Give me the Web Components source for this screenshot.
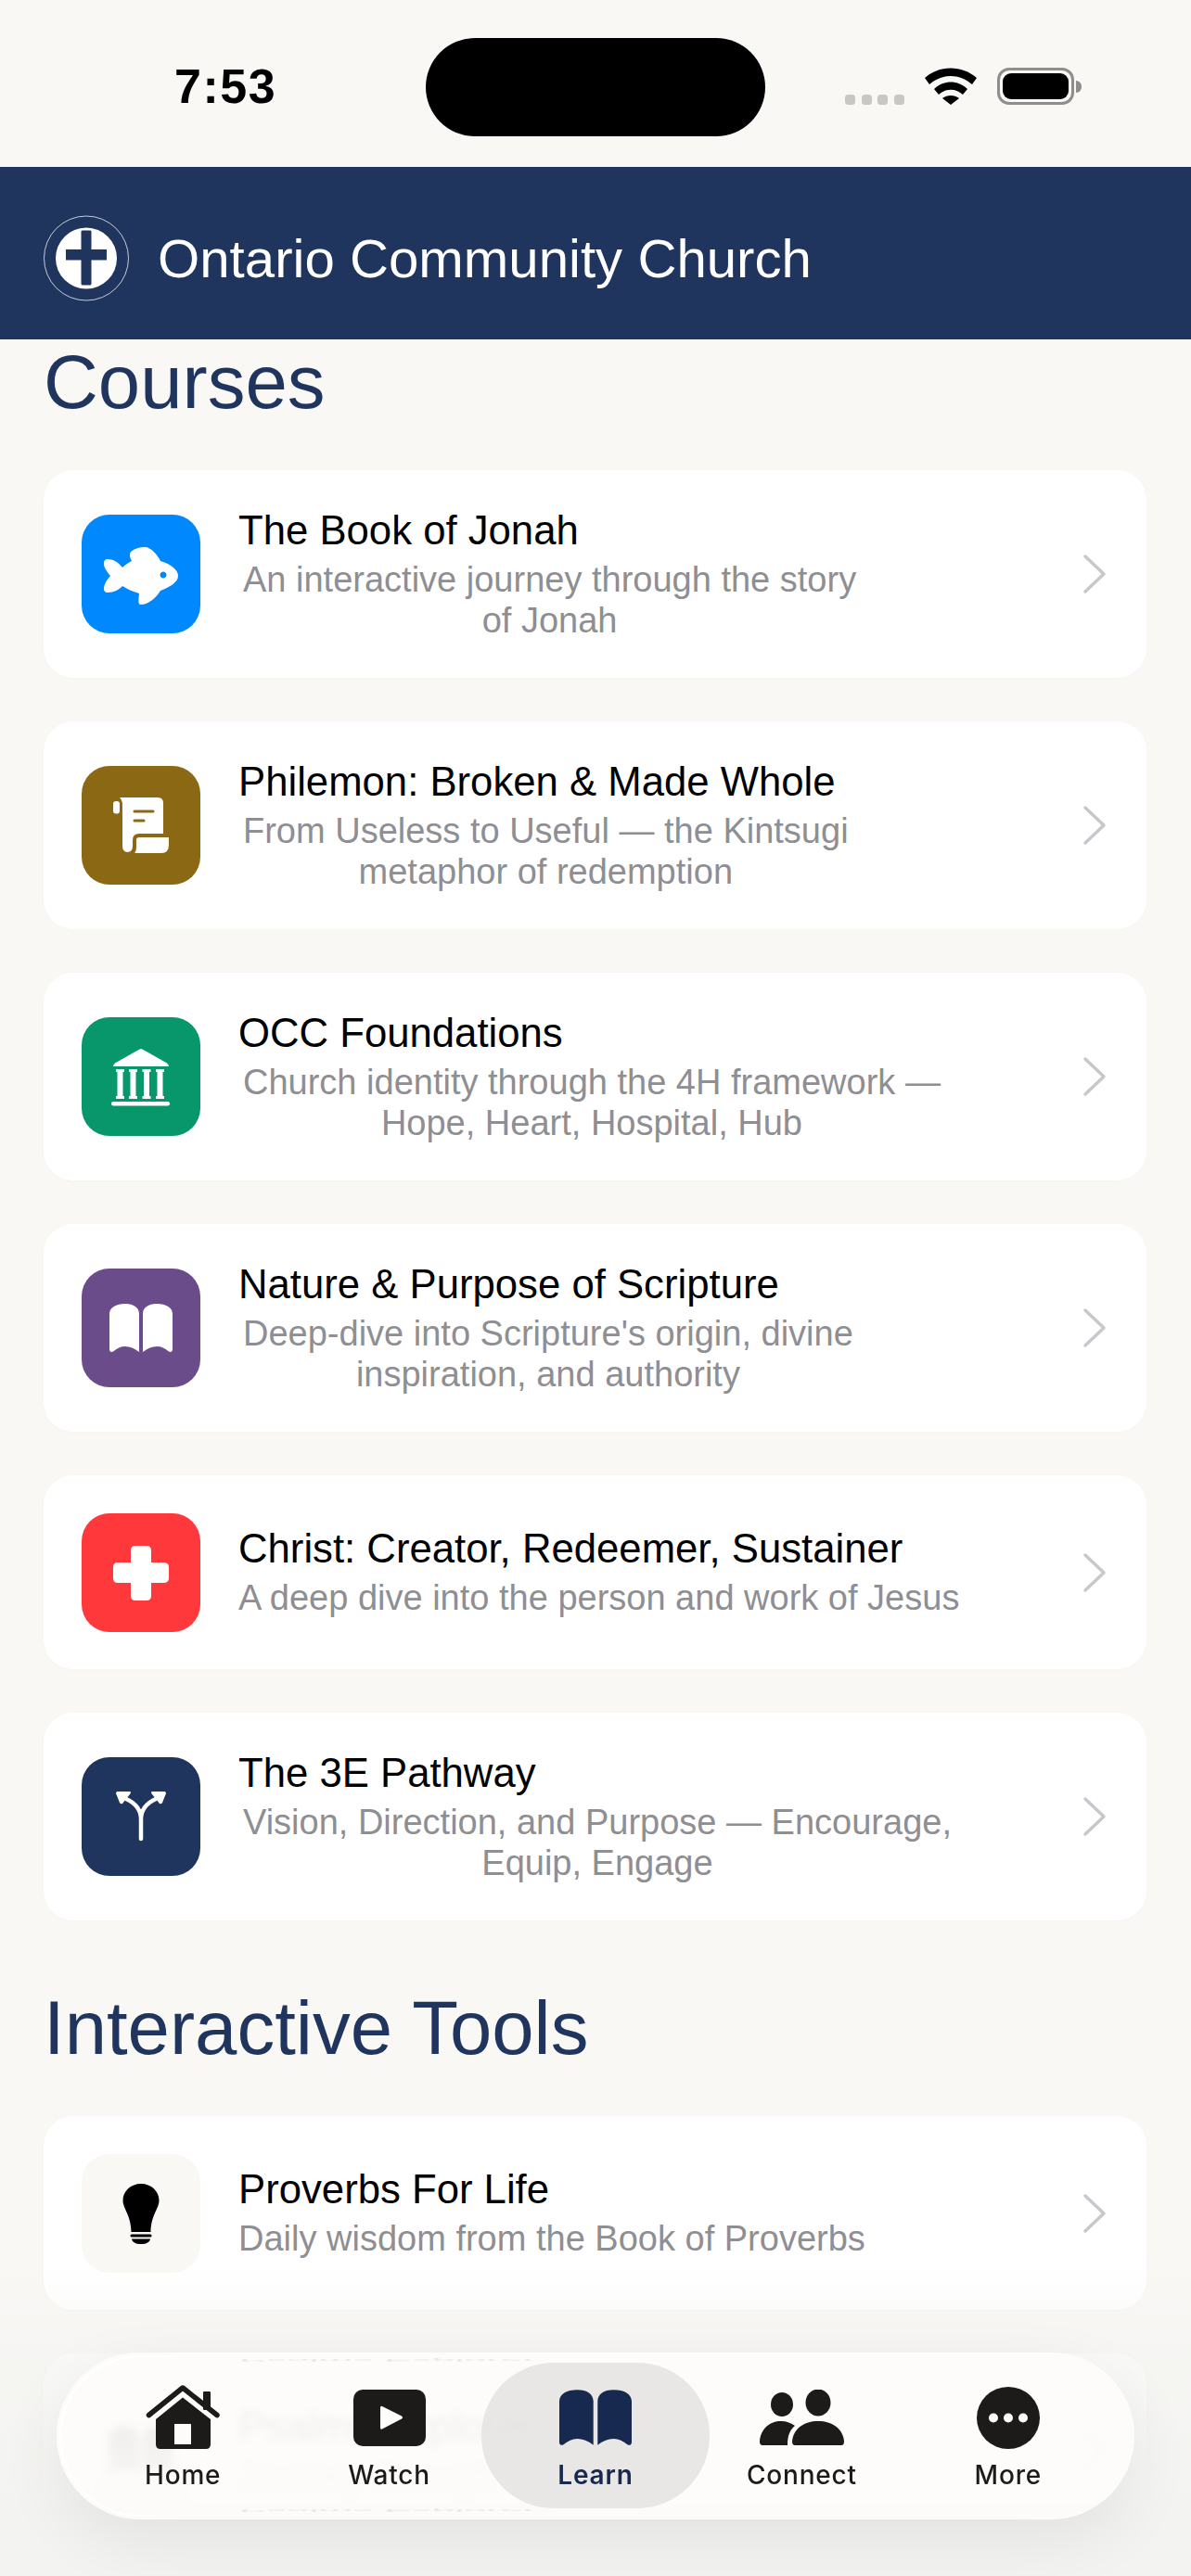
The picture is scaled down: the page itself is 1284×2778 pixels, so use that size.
<!DOCTYPE html>
<html lang="en">
<head>
<meta charset="utf-8">
<title>Ontario Community Church</title>
<style>
  html, body { margin: 0; height: 2778px; overflow: hidden; background: #f9f8f5; }
  body { font-family: "Liberation Sans", Arial, sans-serif; }
</style>
</head>
<body>
<app-screen>
  <status-bar time="7:53"></status-bar>
  <church-header>Ontario Community Church</church-header>
  <course-list>
    <section-title>Courses</section-title>
    <course-row tint="#0088ff" icon="fish" wrapped>
      The Book of Jonah
      <span slot="sub">An interactive journey through the story<br>of Jonah</span>
    </course-row>
    <course-row tint="#8b6914" icon="scroll" wrapped>
      Philemon: Broken &amp; Made Whole
      <span slot="sub">From Useless to Useful — the Kintsugi<br>metaphor of redemption</span>
    </course-row>
    <course-row tint="#07976b" icon="bank" wrapped>
      OCC Foundations
      <span slot="sub">Church identity through the 4H framework —<br>Hope, Heart, Hospital, Hub</span>
    </course-row>
    <course-row tint="#6b4c8a" icon="book" wrapped>
      Nature &amp; Purpose of Scripture
      <span slot="sub">Deep-dive into Scripture's origin, divine<br>inspiration, and authority</span>
    </course-row>
    <course-row tint="#ff383c" icon="plus">
      Christ: Creator, Redeemer, Sustainer
      <span slot="sub">A deep dive into the person and work of Jesus</span>
    </course-row>
    <course-row tint="#1f355e" icon="fork" wrapped>
      The 3E Pathway
      <span slot="sub">Vision, Direction, and Purpose — Encourage,<br>Equip, Engage</span>
    </course-row>
    <section-title later>Interactive Tools</section-title>
    <course-row tint="#f9f8f5" ink="#000" icon="bulb">
      Proverbs For Life
      <span slot="sub">Daily wisdom from the Book of Proverbs</span>
    </course-row>
    <course-row tint="#f9f8f5" ink="#000" icon="book">
      Psalms Explorer
      <span slot="sub">Journey through the Psalms</span>
    </course-row>
  </course-list>
  <bottom-fade></bottom-fade>
  <tab-bar>
    <tab-item icon="home">Home</tab-item>
    <tab-item icon="watch">Watch</tab-item>
    <tab-item icon="learn" active>Learn</tab-item>
    <tab-item icon="connect">Connect</tab-item>
    <tab-item icon="more">More</tab-item>
  </tab-bar>
</app-screen>

<script>
// tile icons are drawn on the 128x128 tile, ink comes from currentColor
const tileIcons = {
  fish: `<path fill-rule="evenodd" d="M31 66C27 61 24 57 24 53C24 50 25 48 28 48C35 48 40 52 44 57C47 54 50 52 54 50C52 46 51 43 53 40C58 36 63 35 69 35C75 36 81 42 85 50C95 53 104 59 104 66C104 73 95 78 85 82C80 90 72 97 64 97C61 97 61 94 62 85C55 83 49 80 44 77C40 81 35 84 28 84C25 84 24 82 24 80C24 75 27 71 31 66ZM88 61.500a3.500 3.500 0 1 0 .01 0Z"/>`,
  scroll: `<rect x="34" y="38" width="7" height="13.500" rx="3"/>
    <path fill-rule="evenodd" d="M41 34H82Q88 34 88 40V73H62Q55 73 55 80V86Q55 93 49.500 93Q44 93 44 86V42Q44 37 41 34ZM57 47.500a1.500 1.500 0 0 0 0 3H77a1.500 1.500 0 0 0 0-3ZM57 57.500a1.500 1.500 0 0 0 0 3H67a1.500 1.500 0 0 0 0-3Z"/>
    <path d="M62 77H94V85Q94 94 86 94H57Q59 92 59 87V80Q59 77 62 77Z"/>`,
  bank: `<path d="M62.500 34.500Q64 33.500 65.500 34.500L92 49.500Q94 51 94 53H34Q34 51 36 49.500Z"/>
    <path d="M37 56H46V59H44.500V85H46V88H37V85H38.500V59H37ZM51 56H60V59H58.500V85H60V88H51V85H52.500V59H51ZM65.500 56H74.500V59H73V85H74.500V88H65.500V85H67V59H65.500ZM80 56H89V59H87.500V85H89V88H80V85H81.500V59H80Z"/>
    <rect x="32" y="91" width="63" height="4.500" rx="2.200"/>`,
  book: `<path d="M30 49C30 42 37 38 47 38C56 38 62 42 62 49V90C57 86 52 84 47 84C42 84 38 86 34 89.500C32 90.500 30 90 30 87Z"/>
    <path d="M98 49C98 42 91 38 81 38C72 38 66 42 66 49V90C71 86 76 84 81 84C86 84 90 86 94 89.500C96 90.500 98 90 98 87Z"/>`,
  plus: `<path d="M58 35H70Q75 35 75 40V53H88Q94 53 94 58V70Q94 75 88 75H75V89Q75 94 70 94H58Q53 94 53 89V75H39Q34 75 34 70V58Q34 53 39 53H53V40Q53 35 58 35Z"/>`,
  fork: `<path d="M64 88V67C64 58 59 50 48 45M64 67C64 58 69 50 80 45" fill="none" stroke="currentColor" stroke-width="4.500" stroke-linecap="round"/>
    <path d="M39 37H52Q54 38 52 40L44 50Q42 51 41 49L37 39Q37 37 39 37Z"/>
    <path d="M89 37H76Q74 38 76 40L84 50Q86 51 87 49L91 39Q91 37 89 37Z"/>`,
  bulb: `<path d="M64 32C75 32 83.500 40 83.500 50C83.500 59 75 65 74.500 84H53.500C53 65 44.500 59 44.500 50C44.500 40 53 32 64 32Z"/>
    <rect x="52.500" y="86.500" width="23" height="3" rx="1.500"/>
    <path d="M54 91.500H74C73.500 95 70 97 64 97C58 97 54.500 95 54 91.500Z"/>`
};

// tab icons have their own size, in px
const tabIcons = {
  home: `<svg width="80" height="70" viewBox="0 0 80 70" fill="currentColor">
    <path d="M3.500 32.500L40 3L77 32.500" fill="none" stroke="currentColor" stroke-width="5.500" stroke-linecap="round" stroke-linejoin="round"/>
    <rect x="62" y="7" width="8" height="20" rx="1"/>
    <path d="M40 13.500L70 37V64Q70 69 65 69H16Q11 69 11 64V37Z"/>
    <rect x="31" y="42" width="18" height="22" fill="#fdfcfa"/></svg>`,
  watch: `<svg width="78" height="61" viewBox="0 0 78 61" fill="currentColor">
    <rect width="78" height="61" rx="10"/>
    <path d="M31 18L52 28.500Q54 30 52 31.500L31 42.500Q29 43.500 29 41V20Q29 17 31 18Z" fill="#fdfcfa"/></svg>`,
  learn: `<svg width="78" height="60" viewBox="30 38 68 52" fill="currentColor">${tileIcons.book}</svg>`,
  connect: `<svg width="91" height="60" viewBox="0 0 91 60" fill="currentColor">
    <ellipse cx="24" cy="16" rx="12" ry="13"/>
    <ellipse cx="63" cy="14" rx="13.500" ry="14.500"/>
    <path d="M3 60Q0 60 0 56C1 42 11 34 23 34C29 34 34 36 38 39C33 43 30 49 30 60Z"/>
    <path d="M38 60Q35 60 35 56C36 42 48 34 63 34C78 34 90 42 91 56Q91 60 88 60Z"/></svg>`,
  more: `<svg width="68" height="67" viewBox="0 0 68 67" fill="currentColor">
    <ellipse cx="34" cy="33.500" rx="34" ry="33.500"/>
    <g fill="#fdfcfa"><circle cx="18" cy="33.500" r="5"/><circle cx="34" cy="33.500" r="5"/><circle cx="50" cy="33.500" r="5"/></g></svg>`
};

class AppScreen extends HTMLElement {
  constructor() {
    super();
    this.attachShadow({ mode: 'open' }).innerHTML = `
      <style>
        :host { display: flex; flex-direction: column; position: relative; width: 1284px; height: 2778px; overflow: hidden; background: #f9f8f5; }
      </style>
      <slot></slot>`;
  }
}

class StatusBar extends HTMLElement {
  connectedCallback() {
    this.shadowRoot || this.attachShadow({ mode: 'open' });
    this.shadowRoot.innerHTML = `
      <style>
        :host { display: flex; height: 180px; box-sizing: border-box; padding-top: 41px; color: #000; }
        .time { width: 459px; box-sizing: border-box; padding: 27px 0 0 188px; font-size: 52px; line-height: 50px; font-weight: 700; letter-spacing: 1.500px; }
        .island { width: 366px; height: 106px; border-radius: 53px; background: #000; }
        .icons { display: flex; align-items: flex-end; gap: 22px; height: 40px; margin: 32px 0 0 86px; }
        .dots { display: flex; gap: 6.500px; }
        .dots i { width: 11px; height: 11px; border-radius: 3.500px; background: #c8c7c5; }
        .battery { display: flex; align-items: center; gap: 2px; }
        .shell { width: 83px; height: 40px; box-sizing: border-box; padding: 3px; border: 3.500px solid #8e8e8e; border-radius: 13px; }
        .shell b { display: block; height: 100%; border-radius: 9px; background: #000; }
        .nub { width: 6px; height: 13px; border-radius: 0 6px 6px 0; background: #8e8e8e; }
        svg { display: block; }
      </style>
      <div class="time">${this.getAttribute('time')}</div>
      <div class="island"></div>
      <div class="icons">
        <div class="dots"><i></i><i></i><i></i><i></i></div>
        <svg width="56" height="40" viewBox="0 0 56 40"><path d="M0 11C16-3 40-3 56 11L51 18C37 6 19 6 5 18Z"/><path d="M10 23C20 13 36 13 46 23L41 29C33 22 23 22 15 29Z"/><path d="M19 33C24 29 32 29 37 33L28 40Z"/></svg>
        <div class="battery"><div class="shell"><b></b></div><div class="nub"></div></div>
      </div>`;
  }
}

class ChurchHeader extends HTMLElement {
  constructor() {
    super();
    this.attachShadow({ mode: 'open' }).innerHTML = `
      <style>
        :host { display: flex; align-items: center; gap: 31px; height: 186px; box-sizing: border-box; padding: 11px 0 0 47px; background: #1f355e; color: #fff; }
        .logo { display: block; flex: none; }
        .name { font-size: 58.200px; line-height: 70px; }
      </style>
      <svg class="logo" width="92" height="93" viewBox="0 0 92 93">
        <circle cx="46" cy="46.500" r="45.500" fill="none" stroke="#fff" stroke-opacity=".75" stroke-width="1"/>
        <circle cx="46" cy="46.500" r="33" fill="#fff"/>
        <path d="M40.500 17.500Q40.500 16.500 42 16.500H50Q51.500 16.500 51.500 17.500V37H68V48.500H51.500V74Q51.500 75.500 50 75.500H42Q40.500 75.500 40.500 74V48.500H24V37H40.500Z" fill="#1f355e"/>
      </svg>
      <div class="name"><slot></slot></div>`;
  }
}

class CourseList extends HTMLElement {
  constructor() {
    super();
    this.attachShadow({ mode: 'open' }).innerHTML = `
      <style>
        :host { display: flex; flex-direction: column; gap: 47px; padding: 0 48px 0 47px; }
      </style>
      <slot></slot>`;
  }
}

class SectionTitle extends HTMLElement {
  constructor() {
    super();
    this.attachShadow({ mode: 'open' }).innerHTML = `
      <style>
        :host { display: block; font-size: 81.500px; line-height: 92px; color: #1f355e; margin-bottom: 2px; }
        :host([later]) { margin-top: 23px; }
      </style>
      <slot></slot>`;
  }
}

class CourseRow extends HTMLElement {
  connectedCallback() {
    this.shadowRoot || this.attachShadow({ mode: 'open' });
    const tint = this.getAttribute('tint');
    const ink = this.getAttribute('ink') || '#fff';
    this.shadowRoot.innerHTML = `
      <style>
        :host { display: flex; align-items: center; gap: 41px; padding: 40.500px 41px; background: #fff; border-radius: 32px; box-shadow: 0 1px 5px rgba(0,0,0,.015); }
        .tile { flex: none; width: 128px; height: 128px; border-radius: 30px; }
        .tile svg { display: block; }
        .text { flex: 1; min-width: 0; }
        .title { font-size: 43.700px; line-height: 48px; margin-bottom: 7px; color: #000; }
        .sub { width: fit-content; font-size: 38px; line-height: 44px; color: #8e8e93; }
        :host([wrapped]) .sub { padding: 0 5px; text-align: center; }
        .chev { flex: none; display: block; margin-right: 2px; }
      </style>
      <div class="tile" style="background:${tint};color:${ink}">
        <svg width="128" height="128" viewBox="0 0 128 128" fill="currentColor">${tileIcons[this.getAttribute('icon')]}</svg>
      </div>
      <div class="text">
        <div class="title"><slot></slot></div>
        <div class="sub"><slot name="sub"></slot></div>
      </div>
      <svg class="chev" width="26" height="44" viewBox="0 0 26 44"><path d="M3 3L23 22L3 41" fill="none" stroke="#c8c8cc" stroke-width="3.500" stroke-linecap="round" stroke-linejoin="round"/></svg>`;
  }
}

// the page fades to grey behind the floating tab bar
class BottomFade extends HTMLElement {
  constructor() {
    super();
    this.attachShadow({ mode: 'open' }).innerHTML = `
      <style>
        :host { position: absolute; left: 0; right: 0; top: 2440px; bottom: 0; pointer-events: none; background: linear-gradient(to bottom, rgba(243,243,241,0) 0, rgba(243,243,241,.5) 90px, rgba(243,243,241,.72) 190px, #f3f3f1 277px); }
      </style>`;
  }
}

class TabBar extends HTMLElement {
  constructor() {
    super();
    this.attachShadow({ mode: 'open' }).innerHTML = `
      <style>
        :host { position: absolute; left: 61px; top: 2537px; width: 1162px; height: 180px; box-sizing: border-box; padding: 0 25px; display: grid; grid-template-columns: repeat(5, 1fr); border-radius: 90px; background: rgba(254,253,251,.84); -webkit-backdrop-filter: blur(4px); backdrop-filter: blur(4px); box-shadow: 0 22px 70px rgba(0,0,0,.07); }
        .rim { position: absolute; inset: 3px; border: 2px solid #fff; border-radius: 87px; -webkit-mask: linear-gradient(to right, #000 90px, transparent 130px); mask: linear-gradient(to right, #000 90px, transparent 130px); pointer-events: none; }
        .echo { position: absolute; left: 197px; font-size: 44px; line-height: 44px; color: rgba(0,0,0,.09); filter: blur(.8px); pointer-events: none; white-space: nowrap; }
        .echo.top { top: -13px; transform: scaleY(-.1); }
        .echo.bottom { bottom: -13px; transform: scaleY(-.1); }
      </style>
      <div class="rim"></div>
      <div class="echo top" aria-hidden="true">Psalms Explorer</div>
      <div class="echo bottom" aria-hidden="true">Psalms Explorer</div>
      <slot></slot>`;
  }
}

class TabItem extends HTMLElement {
  connectedCallback() {
    this.shadowRoot || this.attachShadow({ mode: 'open' });
    this.shadowRoot.innerHTML = `
      <style>
        :host { position: relative; display: flex; flex-direction: column; align-items: center; padding-top: 33px; color: #1c1b19; }
        :host([active]) { color: #17294f; }
        :host([active])::before { content: ""; position: absolute; inset: 11px -12px 12px; border-radius: 78px; background: rgba(228,227,225,.85); }
        .icon { position: relative; display: flex; align-items: center; justify-content: center; height: 74px; }
        .label { position: relative; margin-top: 8px; font-family: Inter, "Liberation Sans", sans-serif; font-size: 28px; line-height: 34px; font-weight: 500; letter-spacing: .8px; }
        :host([active]) .label { font-weight: 600; }
        svg { display: block; }
      </style>
      <div class="icon">${tabIcons[this.getAttribute('icon')]}</div>
      <div class="label"><slot></slot></div>`;
  }
}

customElements.define('app-screen', AppScreen);
customElements.define('status-bar', StatusBar);
customElements.define('church-header', ChurchHeader);
customElements.define('course-list', CourseList);
customElements.define('section-title', SectionTitle);
customElements.define('course-row', CourseRow);
customElements.define('bottom-fade', BottomFade);
customElements.define('tab-bar', TabBar);
customElements.define('tab-item', TabItem);
</script>
</body>
</html>
